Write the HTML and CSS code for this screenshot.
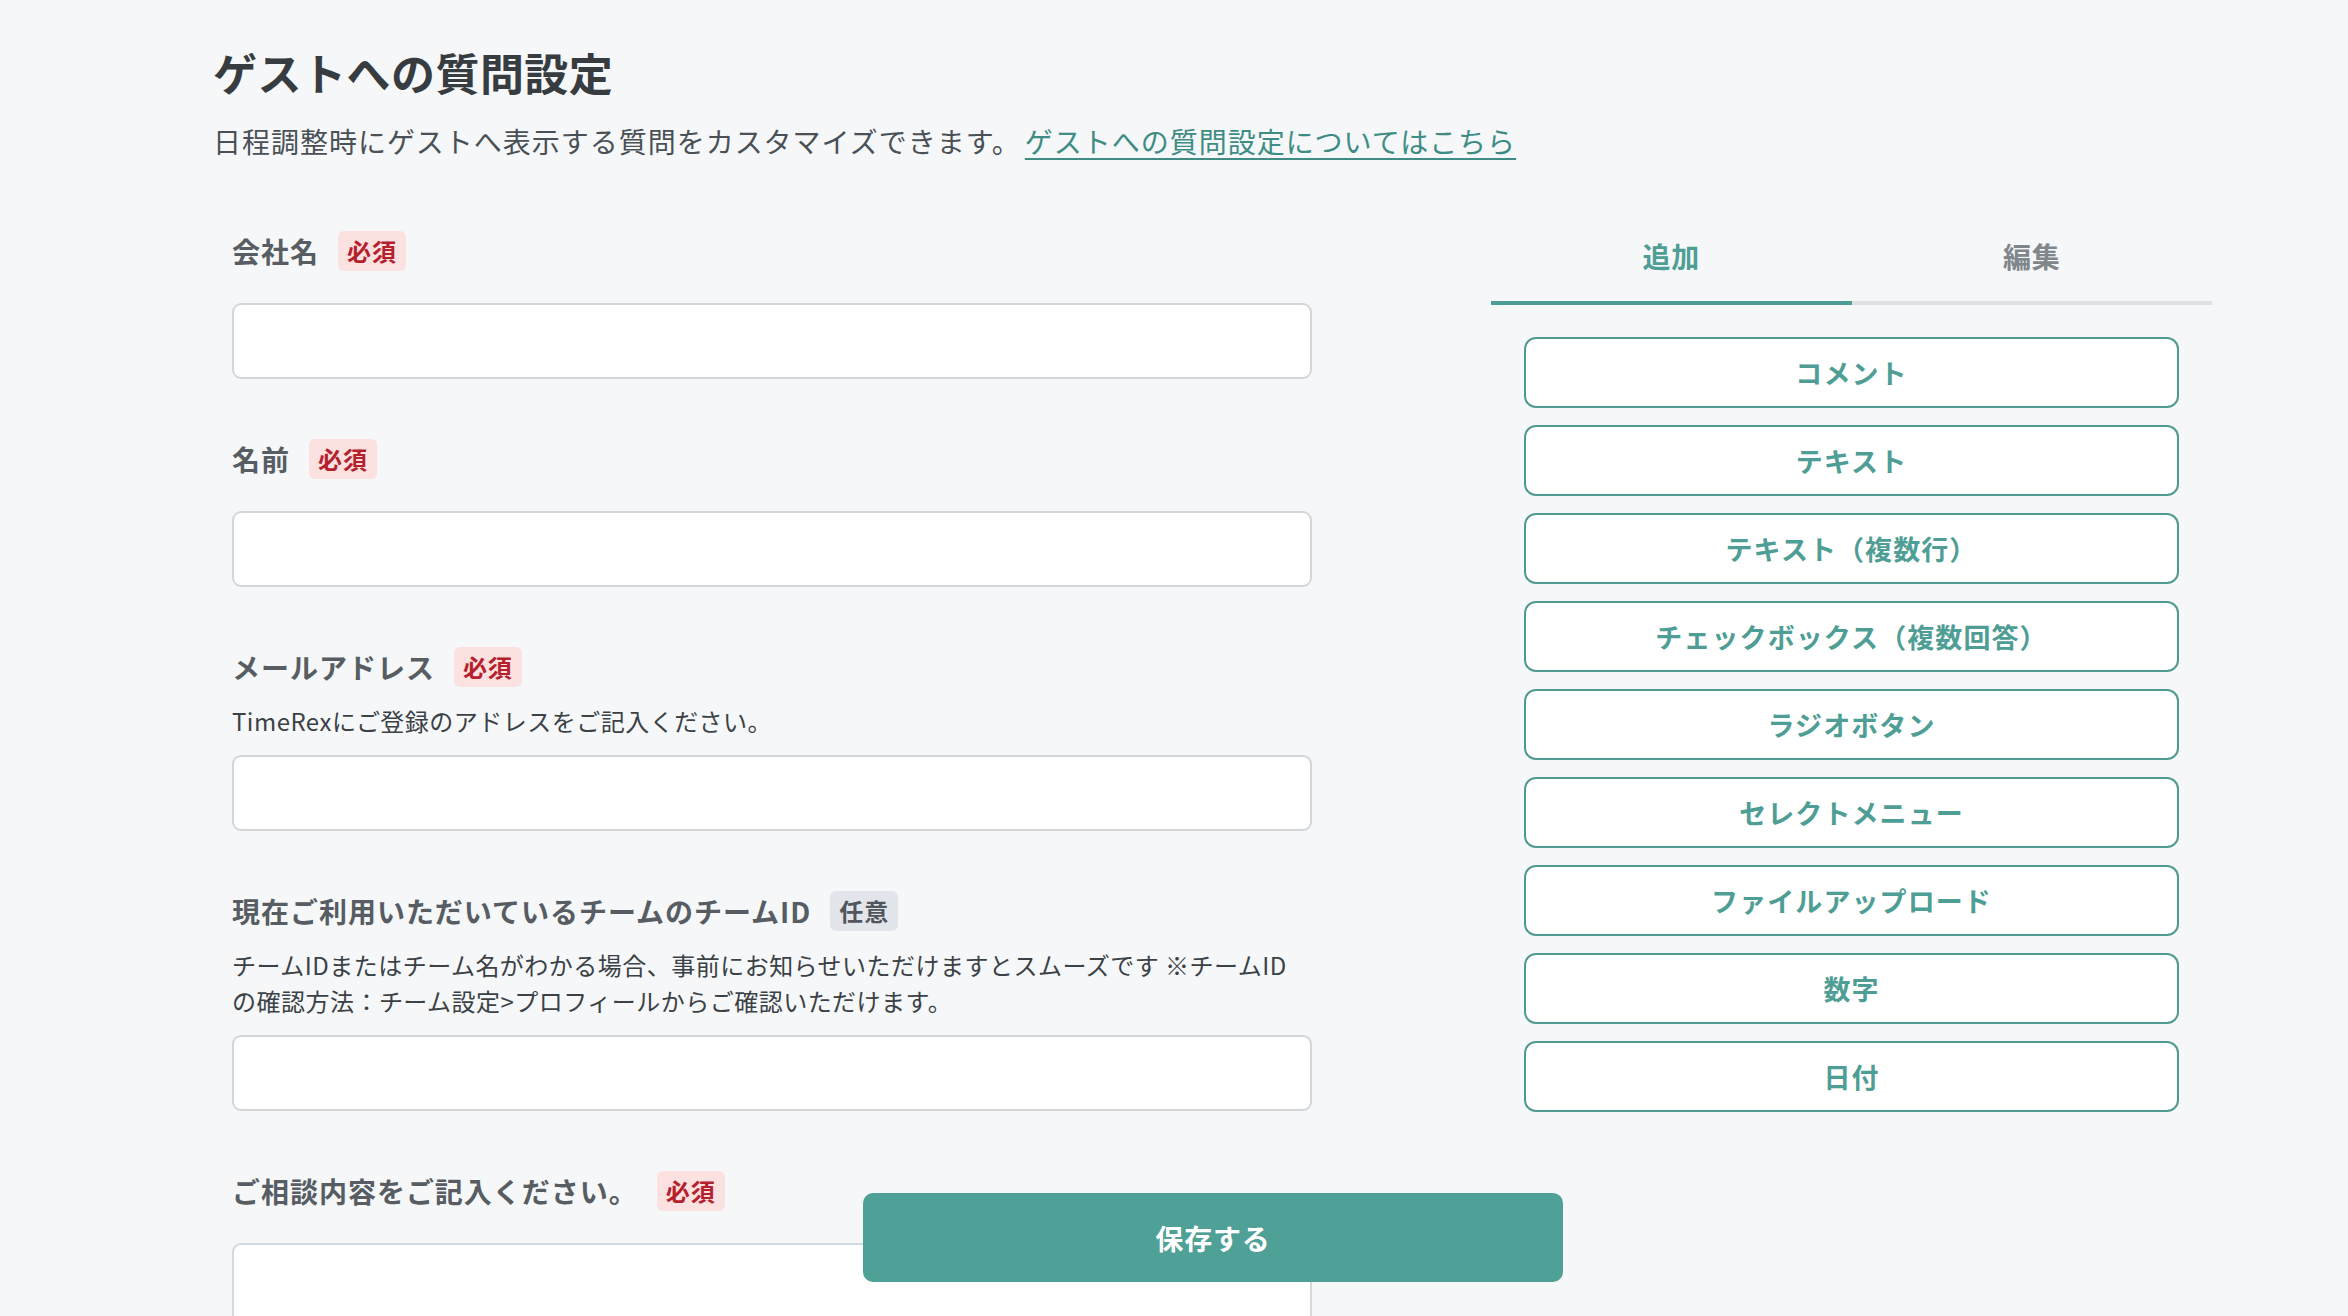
FILE: index.html
```html
<!DOCTYPE html>
<html lang="ja">
<head>
    <meta charset="UTF-8">
    <meta name="viewport" content="width=device-width, initial-scale=1.0">
    <title>ゲストへの質問設定</title>
    <link rel="stylesheet" href="styles.css">
</head>
<body>
    <div class="container">
        <header>
            <h1>ゲストへの質問設定</h1>
            <p class="lead">日程調整時にゲストへ表示する質問をカスタマイズできます。<a href="#">ゲストへの質問設定についてはこちら</a></p>
        </header>
        <div class="content">
            <form class="questions">
                <div class="field">
                    <div class="field-label">
                        <span>会社名</span>
                        <span class="badge required">必須</span>
                    </div>
                    <input type="text">
                </div>
                <div class="field">
                    <div class="field-label">
                        <span>名前</span>
                        <span class="badge required">必須</span>
                    </div>
                    <input type="text">
                </div>
                <div class="field">
                    <div class="field-label">
                        <span>メールアドレス</span>
                        <span class="badge required">必須</span>
                    </div>
                    <p class="help">TimeRexにご登録のアドレスをご記入ください。</p>
                    <input type="email">
                </div>
                <div class="field">
                    <div class="field-label">
                        <span>現在ご利用いただいているチームのチームID</span>
                        <span class="badge optional">任意</span>
                    </div>
                    <p class="help">チームIDまたはチーム名がわかる場合、事前にお知らせいただけますとスムーズです ※チームID<br>の確認方法：チーム設定&gt;プロフィールからご確認いただけます。</p>
                    <input type="text">
                </div>
                <div class="field">
                    <div class="field-label">
                        <span>ご相談内容をご記入ください。</span>
                        <span class="badge required">必須</span>
                    </div>
                    <textarea></textarea>
                </div>
            </form>
            <aside class="panel">
                <div class="tabs">
                    <button class="tab active">追加</button>
                    <button class="tab">編集</button>
                </div>
                <div class="types">
                    <button class="type">コメント</button>
                    <button class="type">テキスト</button>
                    <button class="type">テキスト（複数行）</button>
                    <button class="type">チェックボックス（複数回答）</button>
                    <button class="type">ラジオボタン</button>
                    <button class="type">セレクトメニュー</button>
                    <button class="type">ファイルアップロード</button>
                    <button class="type">数字</button>
                    <button class="type">日付</button>
                </div>
            </aside>
        </div>
    </div>
    <div class="save-bar">
        <button class="save">保存する</button>
    </div>
</body>
</html>
```

FILE: styles.css
```css
body {
    margin: 0;
    background-color: #f5f7f9;
    font-family: "Noto Sans CJK JP", "Noto Sans", sans-serif;
    letter-spacing: 0.03em;
    color: #3b4145;
}
.container {
    width: 2000px;
    margin-left: 213px;
    padding-top: 39px;
}
h1 {
    margin: 0;
    font-size: 44px;
    line-height: 66px;
    font-weight: 700;
    color: #373c40;
}
.lead {
    margin: 15px 0 0;
    font-size: 28px;
    line-height: 42px;
    letter-spacing: 0.035em;
    color: #4a5055;
}
.lead a {
    color: #3e8c83;
    text-decoration: underline;
    text-underline-offset: 5px;
    text-decoration-thickness: 2px;
    margin-left: 4px;
}
.content {
    display: flex;
    align-items: flex-start;
    margin-top: 69px;
}
.questions {
    width: 1080px;
    margin-left: 19px;
}
.field {
    display: flex;
    flex-direction: column;
    margin-bottom: 60px;
}
.field-label {
    display: flex;
    align-items: center;
    gap: 19px;
    height: 40px;
    margin-bottom: 16px;
    font-size: 28px;
    font-weight: 700;
    letter-spacing: 0.035em;
    color: #575d62;
}
.badge {
    height: 40px;
    line-height: 40px;
    padding: 0 9px;
    border-radius: 6px;
    font-size: 24px;
    font-weight: 700;
}
.required {
    background-color: #fbe1df;
    color: #b5202d;
}
.optional {
    background-color: #e2e5e9;
    color: #50565b;
}
.help {
    margin: 0;
    font-size: 24px;
    line-height: 36px;
    white-space: nowrap;
    color: #3b4145;
}
input, textarea {
    box-sizing: border-box;
    width: 100%;
    height: 76px;
    margin-top: 16px;
    border: 2px solid #d3d6d9;
    border-radius: 9px;
    background-color: #ffffff;
    font: inherit;
}
textarea {
    height: 220px;
    resize: none;
    border-color: #d2dae0;
}
.panel {
    width: 721px;
    margin-left: 179px;
}
.tabs {
    display: flex;
}
.tab {
    flex: 1;
    padding: 4px 0 24px;
    border: none;
    border-bottom: 4px solid #dfe2e5;
    background: none;
    font-family: inherit;
    letter-spacing: 0.03em;
    font-size: 28px;
    line-height: 42px;
    font-weight: 700;
    color: #80868a;
}
.tab.active {
    border-bottom-color: #4f9e95;
    color: #4f9e95;
}
.types {
    display: flex;
    flex-direction: column;
    gap: 17px;
    padding: 32px 33px 0;
}
.type {
    height: 71px;
    border: 2px solid #4f9a91;
    border-radius: 12px;
    background-color: #ffffff;
    font-family: inherit;
    letter-spacing: 0.04em;
    font-size: 27px;
    font-weight: 700;
    color: #4f9e95;
}
.save-bar {
    position: fixed;
    left: 213px;
    bottom: 34px;
    width: 2000px;
    display: flex;
    justify-content: center;
}
.save {
    width: 700px;
    height: 89px;
    border: none;
    border-radius: 10px;
    background-color: #4fa096;
    font-family: inherit;
    letter-spacing: 0.03em;
    font-size: 28px;
    font-weight: 700;
    color: #ffffff;
}
```
